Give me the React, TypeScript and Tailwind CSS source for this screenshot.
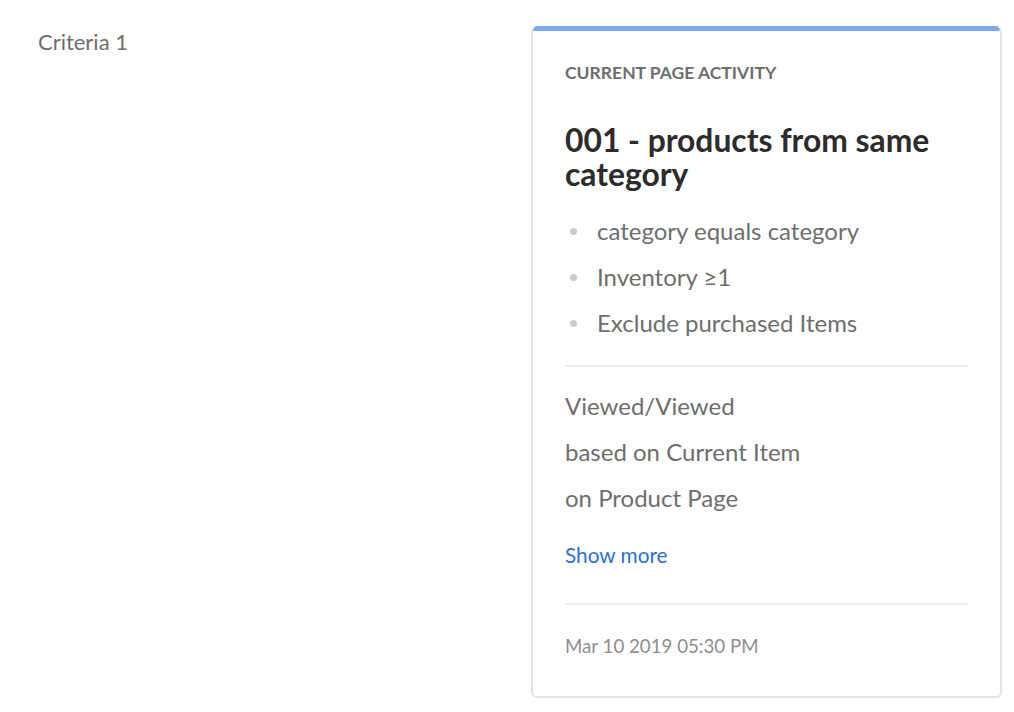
const bullets = ["category equals category", "Inventory ≥1", "Exclude purchased Items"];
const details = ["Viewed/Viewed", "based on Current Item", "on Product Page"];

export default function App() {
  return (
    <div className="flex min-h-[712px] w-[1014px] justify-between bg-white font-['Lato','Open_Sans',sans-serif]">
      <div className="pl-[38px] pt-[27px] text-[22px] leading-[30px] text-[#6e6e6e]">Criteria 1</div>
      <div className="mr-[12px] mt-[26px] mb-[16px] w-[471px] self-start overflow-hidden rounded-[6px] border-2 border-t-0 border-[#e4e4e4] bg-white">
        <div className="h-[5px] bg-[#7aa8f5]" />
        <div className="px-[32px] pt-[30px] pb-[37px]">
          <div className="text-[17.5px] font-bold uppercase leading-[24px] text-[#6e6e6e]">
            Current page activity
          </div>
          <h2 className="mt-[38px] text-[31.8px] font-bold leading-[34px] text-[#2c2c2c]">
            001 - products from same category
          </h2>
          <ul className="mt-[17px] flex flex-col">
            {bullets.map((b) => (
              <li key={b} className="flex h-[46px] items-center text-[24px] text-[#6e6e6e]">
                <span className="ml-[5px] mr-[20px] h-[7px] w-[7px] rounded-full bg-[#cacaca]" />
                {b}
              </li>
            ))}
          </ul>
          <div className="mt-[19px] border-t-2 border-[#ececec]" />
          <div className="mt-[16px] flex flex-col">
            {details.map((d) => (
              <div key={d} className="flex h-[46px] items-center text-[24px] text-[#6e6e6e]">
                {d}
              </div>
            ))}
          </div>
          <div className="mt-[11px] flex h-[46px] items-center text-[20.8px] text-[#2d6fd4]">Show more</div>
          <div className="mt-[25px] border-t-2 border-[#ececec]" />
          <div className="mt-[28px] text-[18.7px] leading-[26px] text-[#8e8e8e]">Mar 10 2019 05:30 PM</div>
        </div>
      </div>
    </div>
  );
}
